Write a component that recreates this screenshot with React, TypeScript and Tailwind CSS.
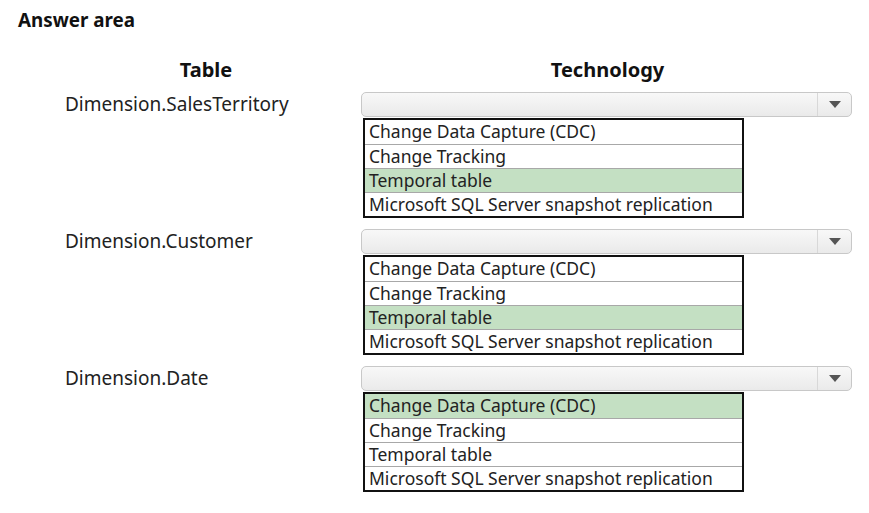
import React from "react";

const OPTIONS = [
  "Change Data Capture (CDC)",
  "Change Tracking",
  "Temporal table",
  "Microsoft SQL Server snapshot replication",
];

const ROWS = [
  { label: "Dimension.SalesTerritory", selected: 2 },
  { label: "Dimension.Customer", selected: 2 },
  { label: "Dimension.Date", selected: 0 },
];

function Caret() {
  return (
    <svg width="12" height="7" viewBox="0 0 12 7">
      <path d="M0 0 L12 0 L6 7 Z" fill="#555" />
    </svg>
  );
}

function Section({ label, selected }: { label: string; selected: number }) {
  return (
    <div className="flex">
      <div className="w-[361px] h-[25px] flex items-center pl-[65px] text-[19px] text-[#222]">
        {label}
      </div>
      <div className="flex flex-col w-[491px]">
        <div className="h-[25px] rounded-[5px] border border-[#c8c8c8] bg-gradient-to-b from-[#f8f8f8] to-[#eaeaea] flex justify-end">
          <div className="w-[34px] border-l border-[#d8d8d8] flex items-center justify-center">
            <Caret />
          </div>
        </div>
        <div className="ml-[2px] mt-[1px] w-[381px] border-2 border-[#111] bg-white">
          {OPTIONS.map((o, i) => (
            <div
              key={o}
              className={`h-[24px] flex items-center pl-[4px] text-[17.5px] leading-none text-[#222] ${
                i > 0 ? "border-t border-[#a8a8a8]" : ""
              } ${i === selected ? "bg-[#c4e0c3]" : ""}`}
            >
              {o}
            </div>
          ))}
        </div>
      </div>
    </div>
  );
}

export default function App() {
  return (
    <div
      className="w-[869px] h-[513px] bg-white relative"
      style={{ fontFamily: '"Noto Sans", "Open Sans", sans-serif' }}
    >
      <div className="pt-[8px] pl-[18px] h-[32px] text-[18.8px] font-bold text-[#111] leading-[24px]">
        Answer area
      </div>
      <div className="flex h-[60px] pt-[25px]">
        <div className="w-[361px] text-center pl-[52px] text-[20px] font-bold text-[#111] leading-[26px]">
          <span className="ml-[-1px]">Table</span>
        </div>
        <div className="w-[491px] text-center text-[20px] font-bold text-[#111] leading-[26px]">
          <span className="ml-[2px]">Technology</span>
        </div>
      </div>
      <div className="flex flex-col gap-[11px]">
        {ROWS.map((r) => (
          <Section key={r.label} label={r.label} selected={r.selected} />
        ))}
      </div>
    </div>
  );
}
